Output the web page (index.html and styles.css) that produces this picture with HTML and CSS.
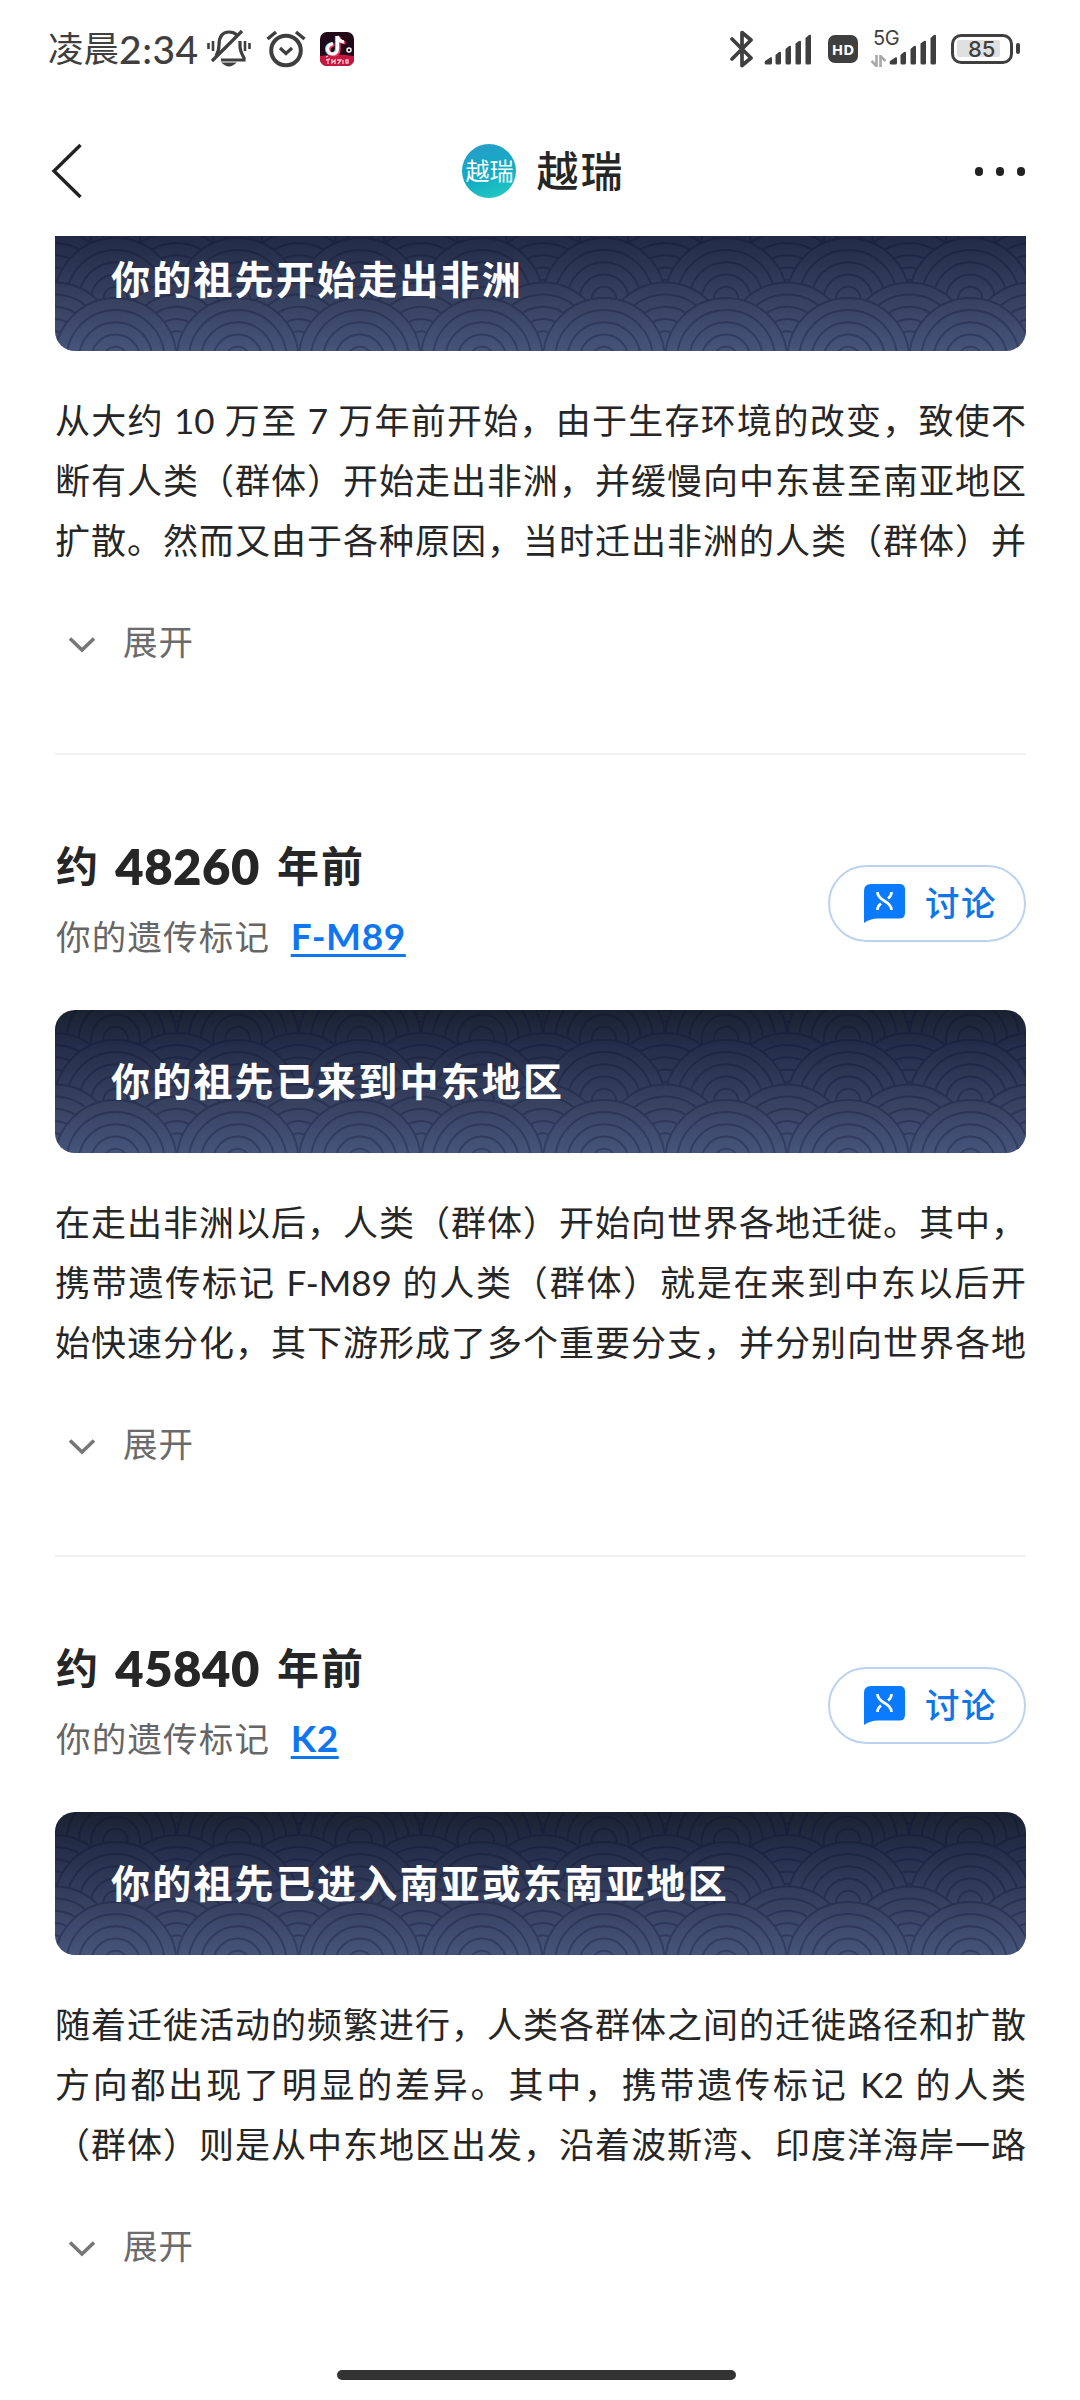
FILE: index.html
```html
<!DOCTYPE html>
<html lang="zh-CN">
<head>
<meta charset="utf-8">
<title>越瑞</title>
<link rel="stylesheet" href="styles.css">
</head>
<body>
<svg class="defs" width="0" height="0" aria-hidden="true">
  <defs>
    <g id="wave" fill="#000" stroke="#fff" stroke-width="2">
      <circle r="61"/><circle r="49"/><circle r="36.7"/><circle r="24.5"/><circle r="12.2"/>
    </g>
    <g id="wave-row">
      <use href="#wave" x="-61.5"/><use href="#wave" x="60.6"/><use href="#wave" x="182.7"/><use href="#wave" x="304.8"/><use href="#wave" x="426.9"/><use href="#wave" x="549"/><use href="#wave" x="671.1"/><use href="#wave" x="793.2"/><use href="#wave" x="915.3"/><use href="#wave" x="1037.4"/>
    </g>
    <mask id="wave-mask" maskUnits="userSpaceOnUse" x="0" y="0" width="971" height="143">
      <use href="#wave-row" x="-61" y="24"/>
      <use href="#wave-row" y="29"/>
      <use href="#wave-row" x="-61" y="84"/>
      <use href="#wave-row" y="91"/>
      <use href="#wave-row" x="-61" y="135.5"/>
      <use href="#wave-row" y="151"/>
    </mask>
    <symbol id="waves" viewBox="0 0 971 143"><rect width="971" height="143" fill="#0c1030" mask="url(#wave-mask)"/></symbol>
    <symbol id="chevron" viewBox="0 0 28 17"><path d="M2 2.5 14 14 26 2.5" fill="none" stroke="#777" stroke-width="3.6"/></symbol>
    <symbol id="chat" viewBox="0 0 41 39">
      <path d="M7 0H35.500Q41 0 41 5.500V29Q41 34.500 35.500 34.500H14Q6 34.500 0 39V7Q0 0 7 0Z" fill="#0a7bff"/>
      <path d="M13.500 8Q13.500 13 20.500 17Q27.500 21 27.500 26M27.500 8Q27.500 12 24 14.500M17 19.500Q13.500 22 13.500 26" fill="none" stroke="#fff" stroke-width="2.700"/>
    </symbol>
    <symbol id="signal" viewBox="0 0 48 31"><path d="M1 27 7 23Q8 23 8 25V29Q8 30.500 6.500 30.500H2Q0 30.500 1 27ZM11.500 21 15 18Q17 17 17 19V29Q17 30.500 15.500 30.500H13Q11.500 30.500 11.500 29ZM21.500 15 25 12Q27 11 27 13V29Q27 30.500 25.500 30.500H23Q21.500 30.500 21.500 29ZM31.500 9.500 35 7Q37 6 37 8V29Q37 30.500 35.500 30.500H33Q31.500 30.500 31.500 29ZM41.500 4 45 1Q47 0 47 2V29Q47 30.500 45.500 30.500H43Q41.500 30.500 41.500 29Z" fill="#3f3f3f"/></symbol>
  </defs>
</svg>

<header class="status">
  <div class="status-left">
    <span class="clock">凌晨<span class="time">2:34</span></span>
    <svg class="mute" viewBox="0 0 44 40" fill="none" stroke="#3f3f3f" stroke-width="3.200">
      <path d="M9 27Q12 22 12 16Q12 3 22 3Q27 3 30 6M33 12V17Q33 22 37 29V31H14M5 32 35 2"/><path d="M1.500 14V20M6 12V22M38 12V22M42.500 14V20" stroke-width="2.600"/><path d="M17 34.500Q22 38.500 27 34.500Z" fill="#3f3f3f" stroke-width="2"/>
    </svg>
    <svg class="alarm" viewBox="0 0 40 38" fill="none" stroke="#3f3f3f" stroke-width="4">
      <circle cx="20" cy="20.500" r="14.800"/><path d="M1.500 9 10 2M30 2 38.500 9" stroke-width="3.500"/><path d="M14 18 20 23.500 26 18" stroke-width="3.200"/>
    </svg>
    <svg class="app" viewBox="0 0 34 34">
      <clipPath id="app-clip"><rect width="34" height="34" rx="7"/></clipPath>
      <g clip-path="url(#app-clip)"><rect width="34" height="34" fill="#210717"/><path d="M0 24Q17 21 34 24V34H0Z" fill="#c5163f"/>
      <g fill="none" stroke-width="3.200"><path d="M17.500 4V17A5 5 0 1 1 13 12M17.500 4Q18 9 24 10" stroke="#35e5e5" transform="translate(-1 0)"/><path d="M17.500 4V17A5 5 0 1 1 13 12M17.500 4Q18 9 24 10" stroke="#f33d68" transform="translate(1.500 1)"/><path d="M17.500 4V17A5 5 0 1 1 13 12M17.500 4Q18 9 24 10" stroke="#fff"/></g>
      <circle cx="29" cy="18" r="2" fill="none" stroke="#fff" stroke-width="1.500"/>
      <path d="M6 28 10 27M8 27V32M12 27V31L15 28V32M17 28H21L18 32M23 28V32M26 28H28V31H26ZM6 25 8 24" fill="none" stroke="#ffc4cf" stroke-width="1.300"/></g>
    </svg>
  </div>
  <div class="status-right">
    <svg class="bluetooth" viewBox="0 0 24 38"><path d="M2 9 21 28 12 35.500V2.500L21 10 2 29" fill="none" stroke="#3f3f3f" stroke-width="3.700" stroke-linejoin="round" stroke-linecap="round"/></svg>
    <svg class="signal first"><use href="#signal"/></svg>
    <span class="hd">HD</span>
    <div class="net">
      <span class="gen">5G</span>
      <svg class="arrows" viewBox="0 0 15 12" fill="none" stroke="#a8a8a8" stroke-width="2.600"><path d="M5.500 0V11L.5 6M9.500 12V1L14.500 6"/></svg>
    </div>
    <svg class="signal"><use href="#signal"/></svg>
    <span class="battery"><span class="level">85</span></span>
  </div>
</header>

<nav class="nav">
  <svg class="back" viewBox="0 0 32 56"><path d="M29.500 2 3 28 29.500 54" fill="none" stroke="#222" stroke-width="3.400"/></svg>
  <div class="who"><span class="avatar">越瑞</span><h1>越瑞</h1></div>
  <div class="more"><i></i><i></i><i></i></div>
</nav>

<main>
  <section>
    <div class="banner"><svg class="waves"><use href="#waves"/></svg><h3>你的祖先开始走出非洲</h3></div>
    <p class="body"><span>从大约 10 万至 7 万年前开始，由于生存环境的改变，致使不</span><span>断有人类（群体）开始走出非洲，并缓慢向中东甚至南亚地区</span><span>扩散。然而又由于各种原因，当时迁出非洲的人类（群体）并</span></p>
    <div class="expand"><svg class="chevron"><use href="#chevron"/></svg><span>展开</span></div>
  </section>
  <section>
    <div class="head">
      <div class="info"><h2>约 <b>48260</b> 年前</h2><div class="marker">你的遗传标记 <a>F-M89</a></div></div>
      <div class="discuss"><svg class="chat"><use href="#chat"/></svg><span>讨论</span></div>
    </div>
    <div class="banner"><svg class="waves"><use href="#waves"/></svg><h3>你的祖先已来到中东地区</h3></div>
    <p class="body"><span>在走出非洲以后，人类（群体）开始向世界各地迁徙。其中，</span><span>携带遗传标记 F-M89 的人类（群体）就是在来到中东以后开</span><span>始快速分化，其下游形成了多个重要分支，并分别向世界各地</span></p>
    <div class="expand"><svg class="chevron"><use href="#chevron"/></svg><span>展开</span></div>
  </section>
  <section>
    <div class="head">
      <div class="info"><h2>约 <b>45840</b> 年前</h2><div class="marker">你的遗传标记 <a>K2</a></div></div>
      <div class="discuss"><svg class="chat"><use href="#chat"/></svg><span>讨论</span></div>
    </div>
    <div class="banner"><svg class="waves"><use href="#waves"/></svg><h3>你的祖先已进入南亚或东南亚地区</h3></div>
    <p class="body"><span>随着迁徙活动的频繁进行，人类各群体之间的迁徙路径和扩散</span><span>方向都出现了明显的差异。其中，携带遗传标记 K2 的人类</span><span>（群体）则是从中东地区出发，沿着波斯湾、印度洋海岸一路</span></p>
    <div class="expand"><svg class="chevron"><use href="#chevron"/></svg><span>展开</span></div>
  </section>
</main>
<footer><div class="home"></div></footer>
</body>
</html>
```
FILE: styles.css
```css
* { box-sizing: border-box; margin: 0; padding: 0; }
body {
  width: 1080px; height: 2400px; overflow: hidden;
  display: flex; flex-direction: column;
  background: #fff; color: #262626;
  font-family: Lato, "Noto Sans CJK SC", sans-serif;
  text-spacing-trim: space-all;
}
svg { display: block; flex: none; }
.defs { position: absolute; }

.status {
  height: 98px; flex: none; padding: 0 67px 0 48px;
  display: flex; justify-content: space-between; align-items: center;
  color: #3f3f3f;
}
.status-left, .status-right { display: flex; align-items: center; }
.clock { width: 159px; font-size: 35.500px; line-height: 50px; white-space: nowrap; display: flex; align-items: center; }
.time { font-size: 39px; letter-spacing: .5px; font-weight: 500; }
.mute { width: 44px; height: 40px; }
.alarm { width: 40px; height: 38px; margin-left: 15px; }
.app { width: 34px; height: 34px; margin-left: 14px; }
.bluetooth { width: 24px; height: 38px; margin-right: 10px; }
.signal { width: 48px; height: 31px; }
.signal.first { margin-right: 16px; }
.hd {
  width: 30px; height: 28px; border-radius: 7px; background: #3f3f3f; color: #fff;
  font: 700 15px/28px "Noto Sans", sans-serif; text-align: center; margin-right: 13px;
}
.net { width: 18px; height: 36px; display: flex; flex-direction: column; justify-content: space-between; }
.gen { font: 20px/18px Inter, sans-serif; padding-left: 2px; margin-top: -2px; white-space: nowrap; letter-spacing: -.5px; }
.arrows { width: 15px; height: 12px; }
.battery {
  width: 62px; height: 30px; margin-left: 14px; border: 3.500px solid #3f3f3f; border-radius: 10px;
  padding: 3px; position: relative;
}
.battery::after {
  content: ""; position: absolute; right: -10px; top: 6px; width: 4px; height: 11px;
  border-radius: 2px; background: #3f3f3f;
}
.level {
  display: block; width: 43px; height: 17px; background: #e0e0e0; border-radius: 2px;
  font: 500 22px/18px Inter, sans-serif; padding-left: 11px;
}

.nav {
  height: 138px; flex: none; padding: 9px 55px 0 51px;
  display: grid; grid-template-columns: 1fr auto 1fr; align-items: center;
}
.back { width: 32px; height: 56px; margin-bottom: 1px; }
.who { display: flex; align-items: center; gap: 20px; margin: 0 -4px 2px 7px; }
.avatar {
  width: 54px; height: 54px; border-radius: 50%; color: #fff;
  background: linear-gradient(160deg, #2a9bc8, #12acc4 55%, #27cfc0);
  font-size: 24px; line-height: 53px; display: flex; justify-content: center; white-space: nowrap;
}
h1 { font-size: 42px; font-weight: 500; line-height: 54px; letter-spacing: 2px; }
.more { display: flex; justify-content: flex-end; gap: 12.500px; }
.more i { width: 8.500px; height: 8.500px; border-radius: 50%; background: #222; }

main { flex: none; height: 2084px; overflow: hidden; padding: 0 54px 0 55px; }
section + section { border-top: 2px solid #f1f1f1; padding-top: 81px; }
section:first-child { margin-top: -28px; }
.head { height: 130px; margin: 0 0 44px; display: flex; justify-content: space-between; align-items: center; }
.info { height: 130px; }
h2 { font-size: 42px; line-height: 60px; letter-spacing: 2px; display: flex; white-space: pre; align-items: center; padding-left: 1px; }
h2 b { font-size: 49px; letter-spacing: .5px; font-weight: 800; margin: 0 5px 0 3px; }
.marker {
  height: 50px; margin-top: 14px; padding-left: 1px; display: flex; align-items: center; gap: 20.500px;
  font-size: 34.500px; letter-spacing: 1.200px; color: #666; white-space: nowrap;
}
.marker a { color: #0f76f0; font-weight: 700; font-size: 37px; letter-spacing: .6px; text-decoration: underline; text-decoration-thickness: 3px; text-underline-offset: 4px; }
.discuss {
  width: 198px; height: 77px; border: 2px solid #bcd3ef; border-radius: 39px; margin-top: 4px;
  display: flex; align-items: center; padding-left: 34px; gap: 20px;
  color: #0f76e8; font-size: 34.500px; font-weight: 500; letter-spacing: 1.500px; white-space: nowrap;
}
.discuss span { margin-bottom: 4px; }
.chat { width: 41px; height: 39px; }
.banner {
  height: 143px; border-radius: 20px; overflow: hidden; position: relative;
  background: linear-gradient(#1a2231, #242d49 25%, #353f5d 60%, #46547b);
}
.waves { position: absolute; left: 0; top: 0; width: 971px; height: 143px; opacity: .29; }
h3 { position: relative; padding-left: 56px; line-height: 143px; font-size: 39px; letter-spacing: 2.200px; color: #fff; }
.body { margin-top: 39px; font-size: 35px; line-height: 60px; color: #262626; }
.body span { display: block; height: 60px; text-align: justify; text-align-last: justify; white-space: nowrap; text-justify: inter-character; }
.expand {
  height: 60px; margin: 42px 0 81px; padding-left: 13px; display: flex; align-items: center; gap: 27px;
  font-size: 34.500px; letter-spacing: 1px; color: #6b6b6b;
}
.expand span { margin-bottom: 5px; }
.chevron { width: 28px; height: 17px; margin-top: 4px; }
footer { flex: none; height: 80px; display: flex; justify-content: center; padding: 50px 7px 0 0; }
.home { width: 399px; height: 10px; border-radius: 5px; background: #333; }
```
